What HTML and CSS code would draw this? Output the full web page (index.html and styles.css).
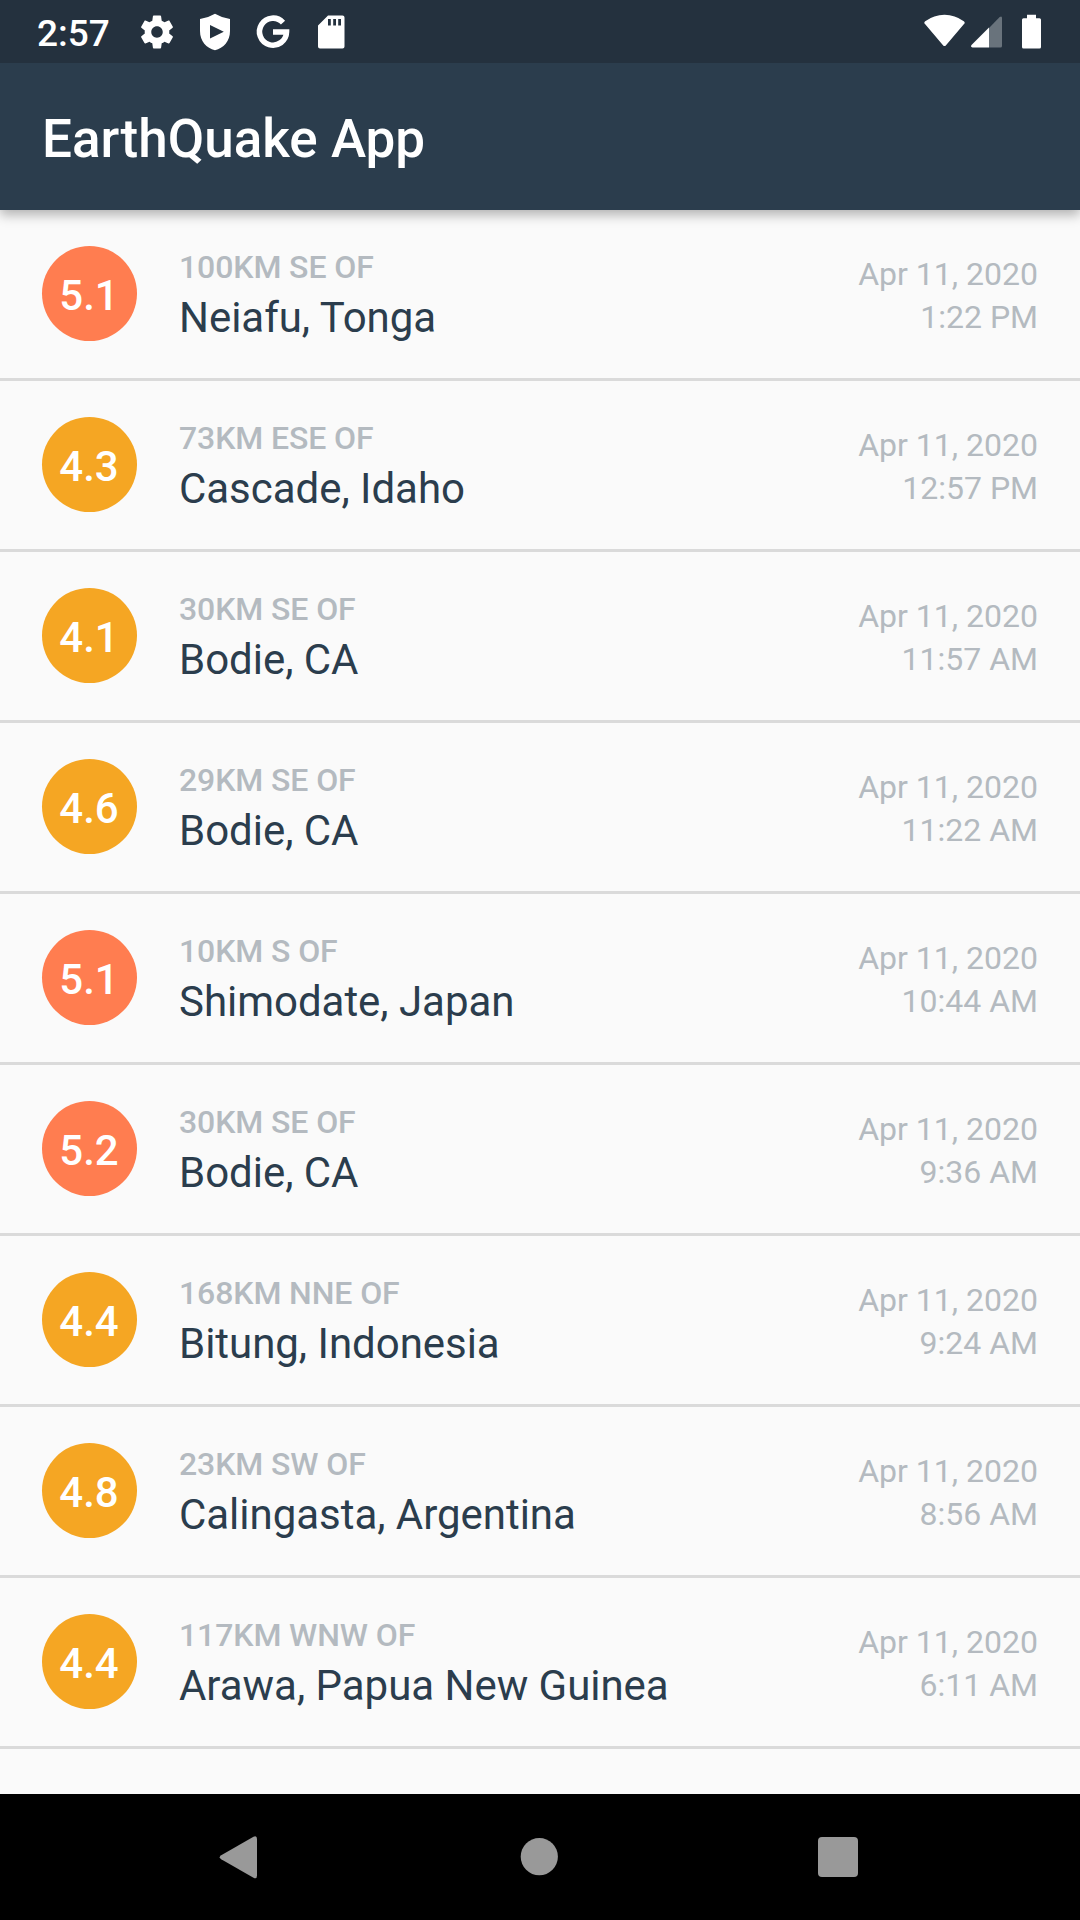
FILE: index.html
```html
<!DOCTYPE html>
<html lang="en">
<head>
<meta charset="utf-8">
<title>EarthQuake App</title>
<link rel="stylesheet" href="styles.css">
</head>
<body>
<div class="screen">
  <div class="status-bar">
    <span class="clock">2:57</span>
    <div class="notifications">
      <svg width="40" height="40" viewBox="0 0 24.4 24.4"><path transform="translate(.2 .2)" d="M19.43 12.98c.04-.32.07-.64.07-.98s-.03-.66-.07-.98l2.11-1.65c.19-.15.24-.42.12-.64l-2-3.46c-.12-.22-.39-.3-.61-.22l-2.49 1c-.52-.4-1.08-.73-1.69-.98l-.38-2.65C14.46 2.18 14.25 2 14 2h-4c-.25 0-.46.18-.49.42l-.38 2.65c-.61.25-1.17.59-1.69.98l-2.49-1c-.23-.09-.49 0-.61.22l-2 3.46c-.13.22-.07.49.12.64l2.11 1.65c-.04.32-.07.65-.07.98s.03.66.07.98l-2.11 1.65c-.19.15-.24.42-.12.64l2 3.46c.12.22.39.3.61.22l2.49-1c.52.4 1.08.73 1.69.98l.38 2.65c.03.24.24.42.49.42h4c.25 0 .46-.18.49-.42l.38-2.65c.61-.25 1.17-.59 1.69-.98l2.49 1c.23.09.49 0 .61-.22l2-3.46c.12-.22.07-.49-.12-.64l-2.11-1.65zM12 15.5c-1.93 0-3.5-1.57-3.5-3.5s1.57-3.5 3.5-3.5 3.5 1.57 3.5 3.5-1.57 3.5-3.5 3.5z"/></svg>
      <svg width="40" height="40" viewBox="0 0 40 40"><path fill-rule="evenodd" d="M20 1.8Q27 6 35 7V19C35 29.500 28.500 36 20 38.200C11.500 36 5 29.500 5 19V7Q13 6 20 1.800zM15 13V26.600L28.800 19.800z"/></svg>
      <svg width="40" height="40" viewBox="0 0 40 40"><path class="stroke" d="M30 10.600A13.500 13.500 0 1 0 33.500 20H20"/></svg>
      <svg width="40" height="40" viewBox="0 0 40 40"><path fill-rule="evenodd" d="M17 3.500H31.500Q33.500 3.500 33.500 5.500V34.500Q33.500 36.500 31.500 36.500H9Q7 36.500 7 34.500V13.500zM17 7V13.500H19.800V7zM22.200 7V13.500H25V7zM27.200 7V13.500H30V7z"/></svg>
    </div>
    <div class="system">
      <svg width="42" height="40" viewBox="0 0 42 40"><path d="M1 12Q-.5 10.500 1.200 9.300Q10 2.800 20.500 2.800T39.800 9.300Q41.500 10.500 40 12L22 33.200Q20.500 35 19 33.200z"/></svg>
      <svg class="signal" width="31" height="40" viewBox="0 0 31 40"><path class="dim" d="M18 16L28.700 5Q31 3.500 31 6V34Q31 35.500 29.500 35.500H18z"/><path d="M18 15.500V35.500H1.500Q-.8 35 .5 33z"/></svg>
      <svg class="battery" width="19" height="40" viewBox="0 0 19 40"><path d="M5 2.700H14V6.200H17.500Q19 6.200 19 7.700V35Q19 36.500 17.500 36.500H1.500Q0 36.500 0 35V7.700Q0 6.200 1.500 6.200H5z"/></svg>
    </div>
  </div>
  <header class="app-bar"><h1 class="app-title">EarthQuake App</h1></header>
  <ul class="quakes">
    <li class="quake"><span class="magnitude strong">5.1</span><div class="place"><span class="offset">100KM SE OF</span><span class="location">Neiafu, Tonga</span></div><div class="when"><span>Apr 11, 2020</span><span>1:22 PM</span></div></li>
    <li class="quake"><span class="magnitude">4.3</span><div class="place"><span class="offset">73KM ESE OF</span><span class="location">Cascade, Idaho</span></div><div class="when"><span>Apr 11, 2020</span><span>12:57 PM</span></div></li>
    <li class="quake"><span class="magnitude">4.1</span><div class="place"><span class="offset">30KM SE OF</span><span class="location">Bodie, CA</span></div><div class="when"><span>Apr 11, 2020</span><span>11:57 AM</span></div></li>
    <li class="quake"><span class="magnitude">4.6</span><div class="place"><span class="offset">29KM SE OF</span><span class="location">Bodie, CA</span></div><div class="when"><span>Apr 11, 2020</span><span>11:22 AM</span></div></li>
    <li class="quake"><span class="magnitude strong">5.1</span><div class="place"><span class="offset">10KM S OF</span><span class="location">Shimodate, Japan</span></div><div class="when"><span>Apr 11, 2020</span><span>10:44 AM</span></div></li>
    <li class="quake"><span class="magnitude strong">5.2</span><div class="place"><span class="offset">30KM SE OF</span><span class="location">Bodie, CA</span></div><div class="when"><span>Apr 11, 2020</span><span>9:36 AM</span></div></li>
    <li class="quake"><span class="magnitude">4.4</span><div class="place"><span class="offset">168KM NNE OF</span><span class="location">Bitung, Indonesia</span></div><div class="when"><span>Apr 11, 2020</span><span>9:24 AM</span></div></li>
    <li class="quake"><span class="magnitude">4.8</span><div class="place"><span class="offset">23KM SW OF</span><span class="location">Calingasta, Argentina</span></div><div class="when"><span>Apr 11, 2020</span><span>8:56 AM</span></div></li>
    <li class="quake"><span class="magnitude">4.4</span><div class="place"><span class="offset">117KM WNW OF</span><span class="location">Arawa, Papua New Guinea</span></div><div class="when"><span>Apr 11, 2020</span><span>6:11 AM</span></div></li>
  </ul>
  <nav class="nav-bar">
    <svg width="42" height="44" viewBox="0 0 42 44"><path d="M3.200 19.300L35.500 .7Q39-.9 39 3V39.500Q39 43.400 35.500 41.700L3.200 23.200Q.2 21.200 3.200 19.300z"/></svg>
    <svg width="42" height="44" viewBox="0 0 42 44"><circle cx="21.300" cy="20.700" r="18.600"/></svg>
    <svg width="42" height="44" viewBox="0 0 42 44"><rect x="1" y="1" width="40" height="40" rx="4"/></svg>
  </nav>
</div>
</body>
</html>
```
FILE: styles.css
```css
* { box-sizing: border-box; }
body { margin: 0; font-family: Roboto, sans-serif; background: #fafafa; }
svg { display: block; fill: #fff; flex: none; }

.screen { display: flex; flex-direction: column; width: 1080px; height: 1920px; overflow: hidden; }

.status-bar {
  display: flex;
  align-items: center;
  height: 63px;
  padding: 0 39px 0 37px;
  background: #24313e;
  color: #fff;
}
.clock { width: 100px; padding-top: 4px; font-size: 37px; font-weight: 500; line-height: 40px; }
.notifications { display: flex; gap: 18px; }
.notifications .stroke { fill: none; stroke: #fff; stroke-width: 5.6; }
.system { display: flex; margin-left: auto; }
.signal { margin-left: 5px; }
.signal .dim { fill: #69737c; }
.battery { margin-left: 20px; }

.app-bar {
  display: flex;
  align-items: center;
  position: relative;
  height: 147px;
  padding: 5px 42px 0;
  background: #2b3d4d;
  color: #fff;
  box-shadow: 0 5px 11px rgba(0, 0, 0, .29);
  clip-path: inset(0 0 -20px 0);
}
.app-title { margin: 0; font-size: 53px; font-weight: 500; line-height: 62px; }

.quakes { flex: 1; margin: 0; padding: 0; list-style: none; }
.quake {
  display: flex;
  align-items: center;
  height: 171px;
  padding: 0 42px;
  border-bottom: 3px solid #dadada;
}
.magnitude {
  width: 95px;
  height: 95px;
  margin-bottom: 2px;
  padding: 4px 1px 0 0;
  border-radius: 50%;
  background: #f5a623;
  color: #fff;
  font-size: 42px;
  font-weight: 500;
  line-height: 91px;
  text-align: center;
}
.magnitude.strong { background: #ff7d50; }
.place { display: flex; flex-direction: column; flex: 1; margin-left: 42px; padding-top: 9px; }
.offset { color: #b4bac0; font-size: 32px; font-weight: 500; line-height: 38px; letter-spacing: -.1px; }
.location { color: #2b3d4d; font-size: 42px; line-height: 63px; letter-spacing: -.03px; }
.when {
  display: flex;
  flex-direction: column;
  padding-top: 3px;
  color: #b4bac0;
  font-size: 32px;
  line-height: 43px;
  text-align: right;
}

.nav-bar {
  display: flex;
  justify-content: space-between;
  height: 126px;
  padding: 42px 221px 0 218px;
  background: #000;
}
.nav-bar svg { fill: #999; }
```
